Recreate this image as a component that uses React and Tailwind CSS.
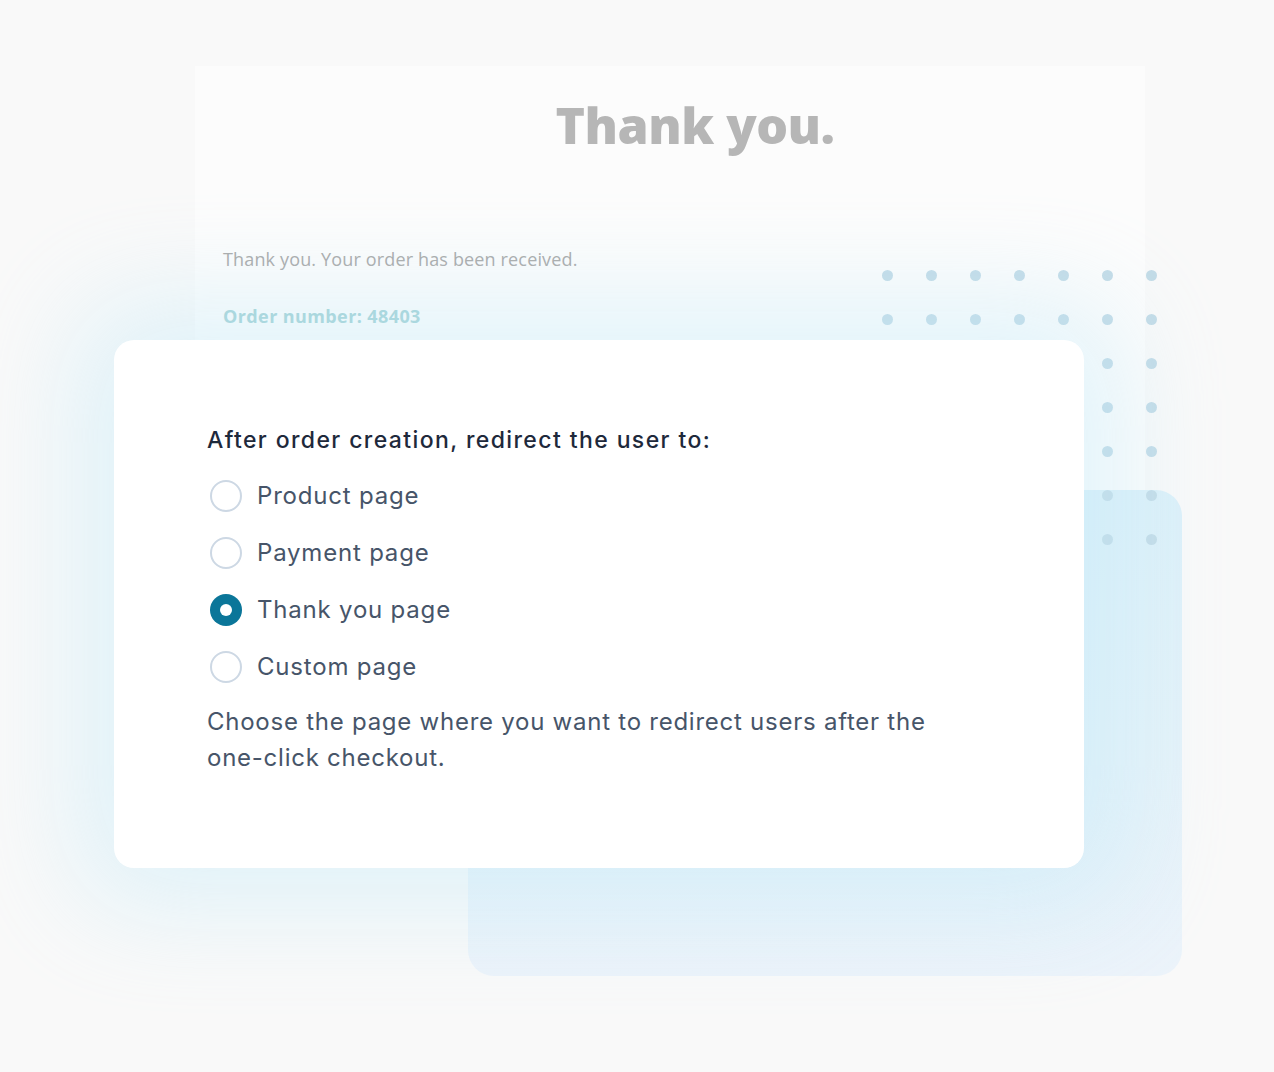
import React, { useState } from 'react';

const options = [
  { id: 'product', label: 'Product page' },
  { id: 'payment', label: 'Payment page' },
  { id: 'thankyou', label: 'Thank you page' },
  { id: 'custom', label: 'Custom page' },
];

function DotGrid() {
  const rows = Array.from({ length: 7 });
  const cols = Array.from({ length: 7 });
  return (
    <div className="grid grid-cols-7 gap-x-[33px] gap-y-[33px]">
      {rows.map((_, r) =>
        cols.map((_, c) => (
          <span key={`${r}-${c}`} className="block w-[11px] h-[11px] rounded-full bg-[#c3dbe7]" />
        ))
      )}
    </div>
  );
}

export default function App() {
  const [selected, setSelected] = useState('thankyou');

  return (
    <div className="w-full h-[1072px] bg-[#f9f9f9] overflow-hidden" style={{ fontFamily: 'Inter, "Noto Sans", sans-serif' }}>
      <div className="relative w-[1274px] h-[1072px]">
        {/* Faded order confirmation page behind */}
        <div className="absolute left-[195px] top-[66px] w-[950px] h-[540px] bg-[#fcfcfc]">
          <h1
            className="pt-[22px] pl-[50px] text-center text-[50px] font-extrabold tracking-[-0.5px] text-[#b6b6b6]"
            style={{ fontFamily: '"Open Sans", sans-serif' }}
          >
            Thank you.
          </h1>
          <div className="pl-[28px] pt-[83px]" style={{ fontFamily: '"Open Sans", sans-serif' }}>
            <p className="text-[18px] tracking-[0.15px] text-[#a9a9a9]">Thank you. Your order has been received.</p>
            <p className="mt-[30px] text-[18px] font-bold tracking-[0.4px] text-[#a4d2d6]">Order number: 48403</p>
          </div>
        </div>

        {/* Blue accent card */}
        <div className="absolute left-[468px] top-[490px] w-[714px] h-[486px] rounded-[26px] bg-gradient-to-b from-[#dcf0f9] via-[#e4f2f9] to-[#ecf3fa]" />

        {/* Dots */}
        <div className="absolute left-[882px] top-[270px]">
          <DotGrid />
        </div>

        {/* Front settings card */}
        <div className="absolute left-[114px] top-[340px] w-[970px] h-[528px] rounded-[20px] bg-white shadow-[0_0_110px_36px_rgba(190,232,248,0.45)]">
          <div className="pl-[93px] pt-[84px]">
            <h2 className="text-[23px] font-medium tracking-[1.4px] text-[#1e293b] leading-[32px]">
              After order creation, redirect the user to:
            </h2>
            <div className="mt-[11px] flex flex-col">
              {options.map((o) => {
                const checked = selected === o.id;
                return (
                  <label
                    key={o.id}
                    onClick={() => setSelected(o.id)}
                    className="flex items-center gap-[15px] h-[57px] cursor-pointer"
                  >
                    <span
                      className={`ml-[3px] flex items-center justify-center w-[32px] h-[32px] rounded-full ${
                        checked ? 'bg-[#0b7699]' : 'border-2 border-[#cdd8e4] bg-white'
                      }`}
                    >
                      {checked && <span className="block w-[12px] h-[12px] rounded-full bg-white" />}
                    </span>
                    <span className="text-[24px] tracking-[0.8px] text-[#475569]">{o.label}</span>
                  </label>
                );
              })}
            </div>
            <p className="mt-[9px] w-[760px] text-[24px] leading-[36px] tracking-[0.75px] text-[#475569]">
              Choose the page where you want to redirect users after the one-click checkout.
            </p>
          </div>
        </div>
      </div>
    </div>
  );
}
